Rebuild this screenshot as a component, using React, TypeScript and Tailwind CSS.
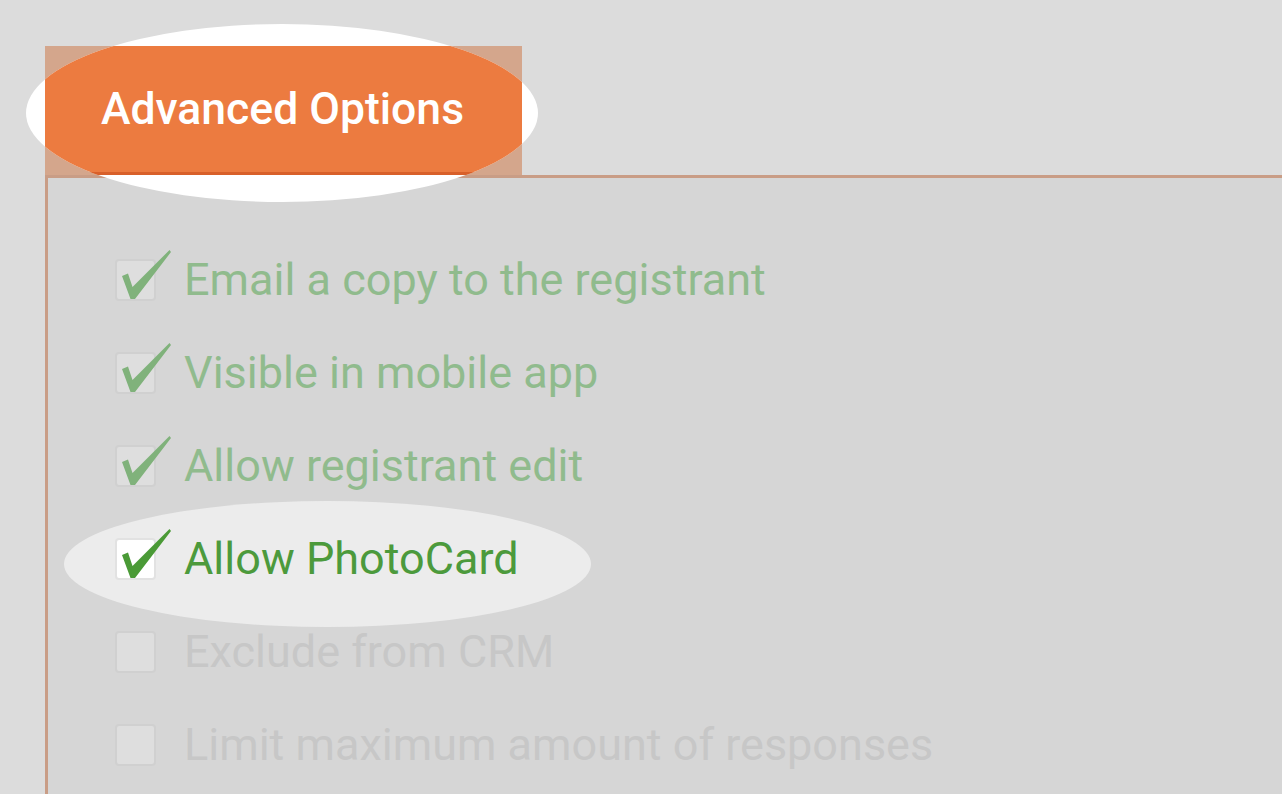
import React from "react";

type Opt = { label: string; checked: boolean; active?: boolean };

const options: Opt[] = [
  { label: "Email a copy to the registrant", checked: true },
  { label: "Visible in mobile app", checked: true },
  { label: "Allow registrant edit", checked: true },
  { label: "Allow PhotoCard", checked: true, active: true },
  { label: "Exclude from CRM", checked: false },
  { label: "Limit maximum amount of responses", checked: false },
];

function Check({ color }: { color: string }) {
  return (
    <svg
      className="absolute left-0 top-[-12px]"
      width="60"
      height="56"
      viewBox="0 0 60 56"
    >
      <path
        d="M5 27 L11 24.5 L15.5 38 L52.5 1 L54 3 L18 50 L13.5 50 Z"
        fill={color}
      />
    </svg>
  );
}

function Row({ opt }: { opt: Opt }) {
  const text = opt.active
    ? "text-[#4c9a3c]"
    : opt.checked
      ? "text-[#90bb8d]"
      : "text-[#c7c7c7]";
  return (
    <div className="relative flex h-[93px] items-center">
      {opt.active && (
        <div className="absolute left-[-51px] top-[-11px] h-[126px] w-[527px] rounded-[50%] bg-[#ececec]" />
      )}
      <div
        className={`relative h-[42px] w-[41px] shrink-0 rounded-[4px] border-2 ${
          opt.active
            ? "border-[#e2e2e2] bg-white"
            : "border-[#d0d0d0] bg-[#dedede]"
        }`}
      >
        {opt.checked && <Check color={opt.active ? "#4a9a36" : "#80b27b"} />}
      </div>
      <span className={`relative ml-[28px] text-[45px] leading-none ${text}`}>
        {opt.label}
      </span>
    </div>
  );
}

export default function App() {
  return (
    <div
      className="relative flex h-[794px] w-[1282px] flex-col overflow-hidden bg-[#dcdcdc] pt-[46px] pl-[45px]"
      style={{ fontFamily: "Roboto, 'Liberation Sans', sans-serif" }}
    >
      {/* tab, with the spotlight that lies over it */}
      <div className="relative h-[129px] w-[477px] shrink-0 bg-[#d4a68c]">
        <div className="absolute left-[-19px] top-[-22px] h-[178px] w-[512px] overflow-hidden rounded-[50%] bg-white">
          <div className="absolute left-[19px] top-[22px] h-[129px] w-[477px] border-b-[3px] border-[#d8602a] bg-[#ec7b40]" />
        </div>
        <div className="relative flex h-[126px] items-center pl-[56px] text-[44.5px] font-medium text-white">
          Advanced Options
        </div>
      </div>

      {/* panel */}
      <div className="flex flex-1 flex-col border-l-[3px] border-t-[3px] border-[#c99d86] bg-[#d6d6d6] pl-[67px] pt-[55px]">
        {options.map((o) => (
          <Row key={o.label} opt={o} />
        ))}
      </div>
    </div>
  );
}
